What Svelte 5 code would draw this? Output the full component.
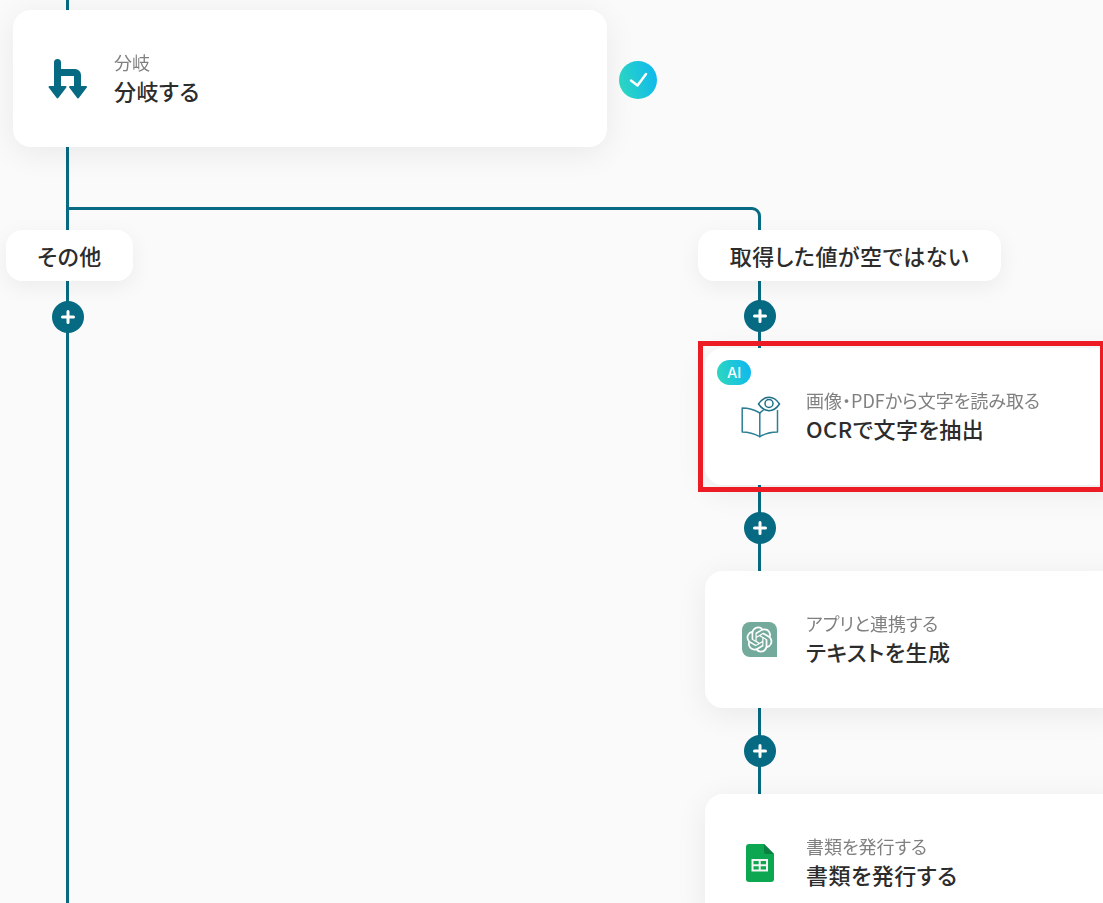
<script>
  const nodes = [
    { cls: 'first', sub: '分岐', title: '分岐する', icon: 'branch' },
    { cls: 'ocr', sub: '画像・PDFから文字を読み取る', title: 'OCRで文字を抽出', icon: 'book', ai: true },
    { cls: 'gpt', sub: 'アプリと連携する', title: 'テキストを生成', icon: 'gpt' },
    { cls: 'sheet', sub: '書類を発行する', title: '書類を発行する', icon: 'sheet' }
  ];
  const pluses = [[52, 301], [744, 300], [744, 512], [744, 735]];
</script>

<main class="canvas">
  <svg class="wires" width="1103" height="903" viewBox="0 0 1103 903" fill="none">
    <path d="M67.5 0V903M67.5 208.5H752a7.5 7.5 0 0 1 7.5 7.5V903" />
  </svg>

  {#each pluses as [x, y]}
    <div class="plus" style="left:{x}px;top:{y}px">
      <svg width="14" height="14" viewBox="0 0 14 14"><path d="M7 1.5v11M1.5 7h11" /></svg>
    </div>
  {/each}

  <div class="label other"><span>その他</span></div>
  <div class="label notempty"><span>取得した値が空ではない</span></div>

  {#each nodes as n}
    <section class="card {n.cls}">
      {#if n.ai}<span class="ai">AI</span>{/if}
      <div class="icon">
        {#if n.icon === 'branch'}
          <svg width="40" height="40" viewBox="0 0 40 40" class="branch">
            <path class="stems" d="M9.500 3.500V28M9.500 13.500H27a2.500 2.500 0 0 1 2.500 2.500V28" />
            <path class="heads" d="M1.500 28H17.500L9.500 38.500ZM22 28H38L30 38.500Z" />
          </svg>
        {:else if n.icon === 'book'}
          <svg width="44" height="44" viewBox="0 0 44 44" fill="none" stroke="#2b7f95" stroke-width="1.500" stroke-linejoin="round" stroke-linecap="round">
            <path d="M21.800 18C16 14.500 10 13 4.200 13V37C10 37 16 38.500 21.800 41.700C27 38.500 33 37 39.500 37V15.500" />
            <path d="M21.800 18V41.700M21.800 18C23 16.500 24.500 15.500 26 14.500" />
            <path d="M20.500 9C23.500 4.500 27 2.300 31 2.300S38.500 4.500 41.500 9C38.500 13.500 35 15.700 31 15.700S23.500 13.500 20.500 9Z" stroke="#1d7088" />
            <circle cx="31" cy="8.500" r="4" stroke="#1d7088" />
          </svg>
        {:else if n.icon === 'gpt'}
          <svg width="36" height="36" viewBox="0 0 36 36">
            <path d="M8 0H27a8 8 0 0 1 8 8V35H8a8 8 0 0 1-8-8V8a8 8 0 0 1 8-8Z" fill="#74aa9c" />
            <g transform="translate(4.500 4.500) scale(1.080)">
              <path fill="#fff" d="M22.2819 9.8211a5.9847 5.9847 0 0 0-.5157-4.9108 6.0462 6.0462 0 0 0-6.5098-2.9A6.0651 6.0651 0 0 0 4.9807 4.1818a5.9847 5.9847 0 0 0-3.9977 2.9 6.0462 6.0462 0 0 0 .7427 7.0966 5.98 5.98 0 0 0 .511 4.9107 6.051 6.051 0 0 0 6.5146 2.9001A5.9847 5.9847 0 0 0 13.2599 24a6.0557 6.0557 0 0 0 5.7718-4.2058 5.9894 5.9894 0 0 0 3.9977-2.9001 6.0557 6.0557 0 0 0-.7475-7.0729zm-9.022 12.6081a4.4755 4.4755 0 0 1-2.8764-1.0408l.1419-.0804 4.7783-2.7582a.7948.7948 0 0 0 .3927-.6813v-6.7369l2.02 1.1686a.071.071 0 0 1 .038.052v5.5826a4.504 4.504 0 0 1-4.4945 4.4944zm-9.6607-4.1254a4.4708 4.4708 0 0 1-.5346-3.0137l.142.0852 4.783 2.7582a.7712.7712 0 0 0 .7806 0l5.8428-3.3685v2.3324a.0804.0804 0 0 1-.0332.0615L9.74 19.9502a4.4992 4.4992 0 0 1-6.1408-1.6464zM2.3408 7.8956a4.485 4.485 0 0 1 2.3655-1.9728V11.6a.7664.7664 0 0 0 .3879.6765l5.8144 3.3543-2.0201 1.1685a.0757.0757 0 0 1-.071 0l-4.8303-2.7865A4.504 4.504 0 0 1 2.3408 7.872zm16.5963 3.8558L13.1038 8.364 15.1192 7.2a.0757.0757 0 0 1 .071 0l4.8303 2.7913a4.4944 4.4944 0 0 1-.6765 8.1042v-5.6772a.79.79 0 0 0-.407-.667zm2.0107-3.0231l-.142-.0852-4.7735-2.7818a.7759.7759 0 0 0-.7854 0L9.409 9.2297V6.8974a.0662.0662 0 0 1 .0284-.0615l4.8303-2.7866a4.4992 4.4992 0 0 1 6.6802 4.66zM8.3065 12.863l-2.02-1.1638a.0804.0804 0 0 1-.038-.0567V6.0742a4.4992 4.4992 0 0 1 7.3757-3.4537l-.142.0805L8.704 5.459a.7948.7948 0 0 0-.3927.6813zm1.0976-2.3654l2.602-1.4998 2.6069 1.4998v2.9994l-2.5974 1.4997-2.6067-1.4997Z" />
            </g>
          </svg>
        {:else}
          <svg width="28" height="38" viewBox="0 0 28 38">
            <path d="M3 0H18L28 10V35a3 3 0 0 1-3 3H3a3 3 0 0 1-3-3V3a3 3 0 0 1 3-3Z" fill="#0ca750" />
            <path d="M18 0L28 10H20a2 2 0 0 1-2-2Z" fill="#0b8043" />
            <path fill-rule="evenodd" d="M5.500 15H22V27.500H5.500ZM7.500 17V20.300H12.700V17ZM14.700 17V20.300H20V17ZM7.500 22.300V25.500H12.700V22.300ZM14.700 22.300V25.500H20V22.300Z" fill="#f4f4f4" />
          </svg>
        {/if}
      </div>
      <div class="text">
        <p class="sub">{n.sub}</p>
        <p class="title">{n.title}</p>
      </div>
    </section>
  {/each}

  <div class="check">
    <svg width="24" height="24" viewBox="0 0 24 24" fill="none"><path d="M5 12.500L11.500 17.500L20 6" /></svg>
  </div>

  <div class="highlight"></div>
</main>

<style>
  :global(body) { margin: 0; }
  p { margin: 0; }
  .canvas {
    position: relative;
    width: 1103px;
    height: 903px;
    overflow: hidden;
    background: #fafafa;
    font-family: "Noto Sans CJK JP", "Noto Sans", sans-serif;
    font-feature-settings: "palt";
  }
  .wires { position: absolute; inset: 0; }
  .wires path { stroke: #066a82; stroke-width: 3; }
  .plus {
    position: absolute;
    width: 32px;
    height: 32px;
    border-radius: 50%;
    background: #066a82;
    display: flex;
    align-items: center;
    justify-content: center;
  }
  .plus path { stroke: #fff; stroke-width: 3; stroke-linecap: round; fill: none; }
  .label {
    position: absolute;
    height: 51px;
    top: 230px;
    display: flex;
    align-items: center;
    justify-content: center;
    background: #fff;
    border-radius: 16px;
    box-shadow: 0 6px 22px rgba(0, 0, 0, 0.06);
    font-size: 22px;
    letter-spacing: 0.5px;
    font-weight: 500;
    color: #2c2c2c;
  }
  .label span { margin-top: -2px; }
  .other { left: 6px; width: 127px; }
  .notempty { left: 698px; width: 303px; }
  .card {
    position: absolute;
    display: flex;
    align-items: center;
    background: #fff;
    border-radius: 18px;
    box-shadow: 0 6px 32px rgba(0, 0, 0, 0.07);
    box-sizing: border-box;
    height: 137px;
  }
  .first { left: 13px; top: 10px; width: 594px; }
  .ocr { left: 705px; top: 348px; width: 420px; }
  .gpt { left: 705px; top: 571px; width: 420px; }
  .sheet { left: 705px; top: 794px; width: 420px; }
  .icon {
    width: 101px;
    flex: none;
    display: flex;
    align-items: center;
    justify-content: center;
    padding-left: 8px;
    box-sizing: border-box;
  }
  .branch .stems { fill: none; stroke: #066a82; stroke-width: 7; stroke-linecap: round; stroke-linejoin: round; }
  .branch .heads { fill: #066a82; stroke: #066a82; stroke-width: 2; stroke-linejoin: round; }
  .text { display: flex; flex-direction: column; gap: 1px; margin-top: -2px; }
  .sub { font-size: 18px; line-height: 24px; color: #808080; will-change: transform; }
  .title { font-size: 22px; letter-spacing: 0.5px; line-height: 31px; font-weight: 500; color: #2c2c2c; }
  .ai {
    position: absolute;
    left: 12px;
    top: 12px;
    width: 34px;
    height: 25px;
    border-radius: 13px;
    background: linear-gradient(75deg, #2fd9bc, #0cb6f2);
    color: #fff;
    font-family: Inter, sans-serif;
    font-size: 14.500px;
    font-weight: 500;
    line-height: 25px;
    text-align: center;
  }
  .check {
    position: absolute;
    left: 619px;
    top: 61px;
    width: 38px;
    height: 38px;
    border-radius: 50%;
    background: linear-gradient(75deg, #2fd9bc, #0cb6f2);
    display: flex;
    align-items: center;
    justify-content: center;
  }
  .check path { stroke: #fff; stroke-width: 2.500; stroke-linecap: round; stroke-linejoin: round; }
  .highlight {
    position: absolute;
    left: 698px;
    top: 341px;
    width: 407px;
    height: 151px;
    box-sizing: border-box;
    border: 5px solid #ed1c24;
  }
</style>
